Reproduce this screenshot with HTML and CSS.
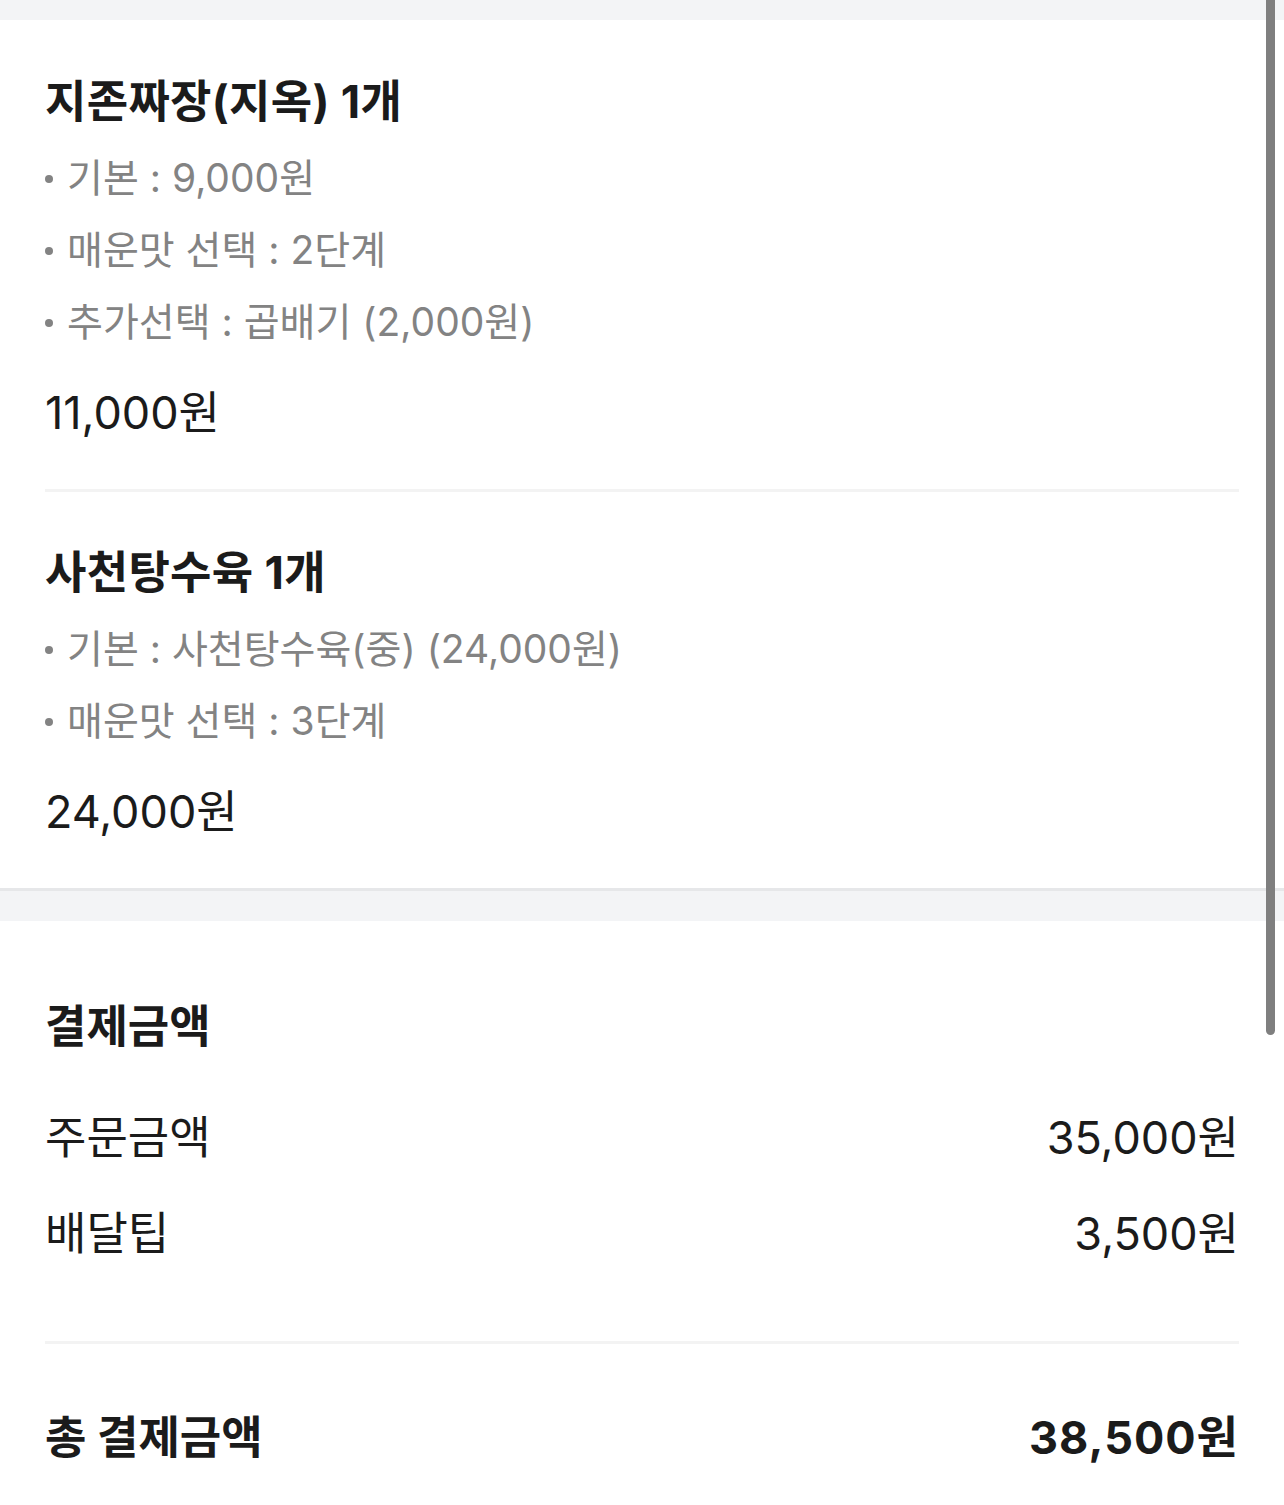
FILE: index.html
```html
<!DOCTYPE html>
<html lang="ko">
<head>
<meta charset="utf-8">
<title>주문 상세</title>
<link rel="stylesheet" href="styles.css">
</head>
<body>
<div class="page">
  <section class="menu-section">
    <div class="item">
      <h2 class="item-title">지존짜장(지옥) 1개</h2>
      <ul class="options">
        <li>기본 : 9,000원</li>
        <li>매운맛 선택 : 2단계</li>
        <li>추가선택 : 곱배기 (2,000원)</li>
      </ul>
      <p class="item-price">11,000원</p>
    </div>
    <div class="item">
      <h2 class="item-title">사천탕수육 1개</h2>
      <ul class="options">
        <li>기본 : 사천탕수육(중) (24,000원)</li>
        <li>매운맛 선택 : 3단계</li>
      </ul>
      <p class="item-price">24,000원</p>
    </div>
  </section>
  <section class="pay-section">
    <h2 class="pay-title">결제금액</h2>
    <div class="pay-rows">
      <div class="pay-row"><span>주문금액</span><span>35,000원</span></div>
      <div class="pay-row"><span>배달팁</span><span>3,500원</span></div>
    </div>
    <div class="total-row"><span>총 결제금액</span><span>38,500원</span></div>
  </section>
</div>
<div class="scrollbar"></div>
</body>
</html>
```

FILE: styles.css
```css
html, body {
  margin: 0;
  padding: 0;
}
body {
  background: #f3f4f6;
  font-family: "Inter", "Noto Sans CJK KR", "Noto Sans", sans-serif;
  color: #1b1b1b;
  padding-top: 20px;
}
.page {
  display: flex;
  flex-direction: column;
}
.menu-section {
  background: #fff;
  padding: 0 45px;
  border-bottom: 3px solid #e6e7e9;
}
.item {
  padding: 52px 0 46px;
  border-bottom: 3px solid #f3f3f3;
}
.item + .item {
  padding-top: 51px;
}
.item:last-child {
  border-bottom: none;
}
.item-title {
  margin: 0;
  font-size: 45px;
  font-weight: 700;
  line-height: 60px;
  color: #1b1b1b;
  letter-spacing: 0.3px;
}
.options {
  list-style: none;
  margin: 10px 0 0;
  padding: 0;
}
.options li {
  font-size: 39px;
  line-height: 72px;
  color: #838383;
}
.options li::before {
  content: "";
  display: inline-block;
  width: 8px;
  height: 8px;
  border-radius: 50%;
  background: #838383;
  margin-right: 14px;
  vertical-align: middle;
  position: relative;
  top: -2px;
}
.item-price {
  margin: 25px 0 0;
  font-size: 45px;
  line-height: 60px;
  color: #1b1b1b;
}
.pay-section {
  background: #fff;
  margin-top: 30px;
  padding: 76px 45px 60px;
}
.pay-title {
  margin: 0;
  font-size: 45px;
  font-weight: 700;
  line-height: 60px;
}
.pay-rows {
  display: flex;
  flex-direction: column;
  gap: 36px;
  margin-top: 51px;
  padding-bottom: 77px;
  border-bottom: 3px solid #f3f3f3;
}
.pay-row {
  display: flex;
  justify-content: space-between;
  font-size: 45px;
  line-height: 60px;
}
.total-row {
  display: flex;
  justify-content: space-between;
  margin-top: 64px;
  font-size: 45px;
  font-weight: 700;
  line-height: 60px;
}
.total-row span:last-child {
  letter-spacing: 1px;
}
.scrollbar {
  position: fixed;
  top: 0;
  right: 9px;
  width: 9px;
  height: 1035px;
  border-radius: 0 0 5px 5px;
  background: #7f7f7f;
}
```
